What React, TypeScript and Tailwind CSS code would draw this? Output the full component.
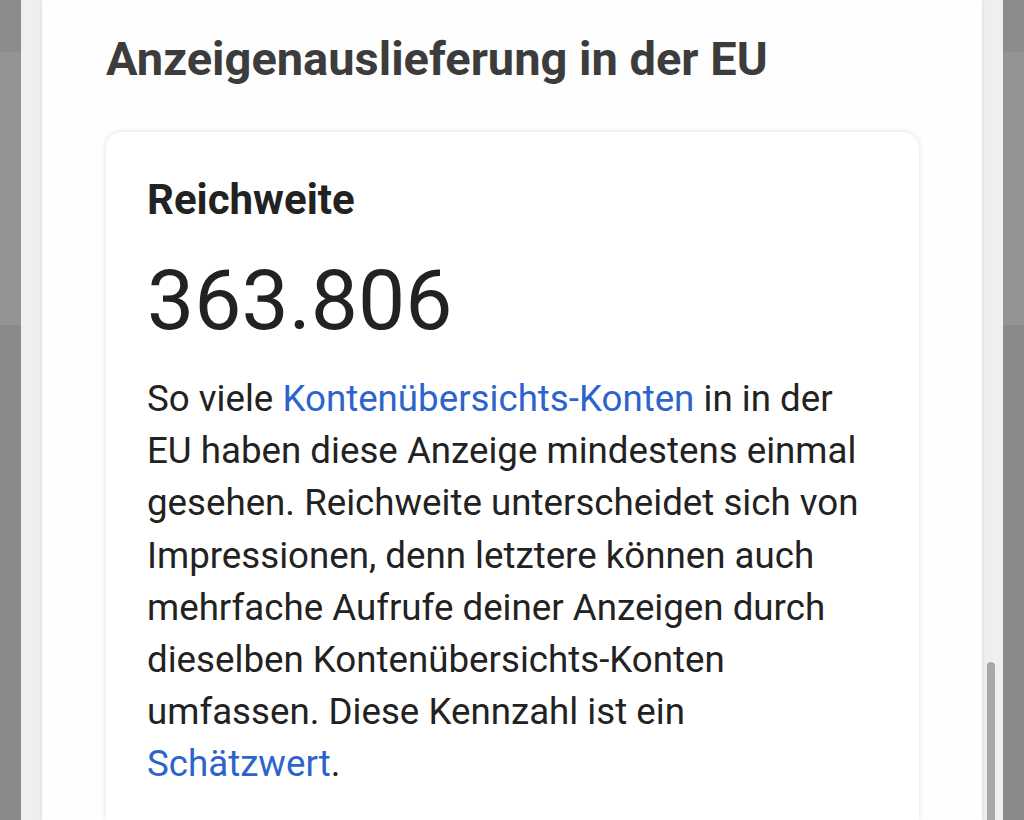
export default function App() {
  return (
    <div className="relative h-[820px] w-[1024px] overflow-hidden font-['Roboto',sans-serif]">
      {/* dimmed page behind the sheet */}
      <div className="flex h-full flex-col">
        <div className="h-[52px] bg-[#8b8b8b]" />
        <div className="h-[273px] bg-[#939393]" />
        <div className="flex-1 bg-[#8a8a8a]" />
      </div>

      <div className="absolute inset-y-0 left-[21px] right-[21px] flex bg-[#efefef]">
        <div className="ml-[21px] flex w-[940px] flex-col bg-[#fefefe] pl-[64px] pr-[63px] pt-[31px] shadow-[0_0_4px_rgba(0,0,0,0.12)]">
          <h1 className="text-[47px] font-bold leading-[56px] text-[#3c3c3c]">
            Anzeigenauslieferung in der EU
          </h1>

          <div className="mt-[45px] flex-1 rounded-t-[16px] bg-white px-[41px] pt-[44px] shadow-[0_0_6px_rgba(0,0,0,0.12)]">
            <h2 className="text-[42px] font-bold leading-[48px] text-[#222222]">
              Reichweite
            </h2>
            <div className="mt-[29px] text-[84px] leading-[96px] text-[#222222]">
              363.806
            </div>
            <p className="mt-[24px] text-[36.7px] leading-[52.2px] text-[#222222]">
              So viele <a className="text-[#2d64cc]">Kontenübersichts-Konten</a> in in der
              <br />
              EU haben diese Anzeige mindestens einmal
              <br />
              gesehen. Reichweite unterscheidet sich von
              <br />
              Impressionen, denn letztere können auch
              <br />
              mehrfache Aufrufe deiner Anzeigen durch
              <br />
              dieselben Kontenübersichts-Konten
              <br />
              umfassen. Diese Kennzahl ist ein
              <br />
              <a className="text-[#2d64cc]">Schätzwert</a>.
            </p>
          </div>
        </div>

        {/* scrollbar */}
        <div className="flex w-[21px] flex-col justify-end pl-[5px]">
          <div className="h-[158px] w-[8px] rounded-t-full bg-[#a8a8a8]" />
        </div>
      </div>
    </div>
  );
}
